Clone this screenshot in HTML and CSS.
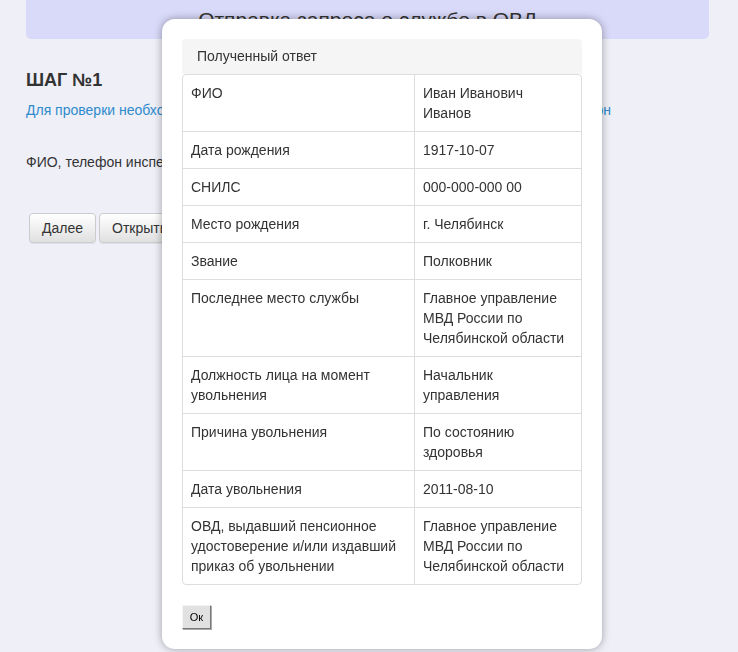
FILE: index.html
```html
<!DOCTYPE html>
<html lang="ru">
<head>
<meta charset="utf-8">
<link rel="stylesheet" href="styles.css">
</head>
<body>
<div class="page">
  <div class="topbar"><h1 class="title">Отправка запроса о службе в ОВД</h1></div>
  <h2 class="step">ШАГ №1</h2>
  <p class="hint">Для проверки необходимо заполнить поля ФИО инспектора и новый контактный телефон</p>
  <p class="field">ФИО, телефон инспектора</p>
  <div class="actions">
    <button class="btn">Далее</button>
    <button class="btn">Открыть запрос</button>
  </div>
</div>

<div class="modal">
  <div class="panel">
    <div class="panel-heading">Полученный ответ</div>
    <table class="data">
      <tr><td>ФИО</td><td>Иван Иванович Иванов</td></tr>
      <tr><td>Дата рождения</td><td>1917-10-07</td></tr>
      <tr><td>СНИЛС</td><td>000-000-000 00</td></tr>
      <tr><td>Место рождения</td><td>г. Челябинск</td></tr>
      <tr><td>Звание</td><td>Полковник</td></tr>
      <tr><td>Последнее место службы</td><td>Главное управление МВД России по Челябинской области</td></tr>
      <tr><td>Должность лица на момент увольнения</td><td>Начальник управления</td></tr>
      <tr><td>Причина увольнения</td><td>По состоянию здоровья</td></tr>
      <tr><td>Дата увольнения</td><td>2011-08-10</td></tr>
      <tr><td>ОВД, выдавший пенсионное удостоверение и/или издавший приказ об увольнении</td><td>Главное управление МВД России по Челябинской области</td></tr>
    </table>
  </div>
  <button class="ok">Ок</button>
</div>
</body>
</html>
```

FILE: styles.css
```css
html, body {
  margin: 0;
  padding: 0;
  height: 100%;
  overflow: hidden;
}
body {
  background: #efeff8;
  font-family: "Liberation Sans", Arial, sans-serif;
  font-size: 14px;
  line-height: 20px;
  color: #333;
}
.page {
  padding: 0 29px 0 26px;
}
.topbar {
  background: #d9d9f9;
  height: 39px;
  border-radius: 0 0 5px 5px;
  display: flex;
  justify-content: center;
}
.title {
  margin: 0;
  font-size: 21px;
  font-weight: normal;
  line-height: 24px;
  padding-top: 8px;
  color: #333;
  white-space: nowrap;
}
.step {
  margin: 30px 0 0;
  font-size: 18px;
  font-weight: bold;
  line-height: 22px;
}
.hint {
  margin: 9px 0 0;
  color: #2e8bcc;
  white-space: nowrap;
}
.field {
  margin: 32px 0 0;
  white-space: nowrap;
}
.actions {
  margin-top: 41px;
  padding-left: 3px;
  display: flex;
  gap: 3px;
}
.btn {
  font-family: "Liberation Sans", Arial, sans-serif;
  font-size: 14px;
  line-height: 20px;
  color: #333;
  height: 30px;
  padding: 4px 12px;
  border: 1px solid #ccc;
  border-radius: 4px;
  background: linear-gradient(#ffffff, #e0e0e0);
  box-shadow: inset 0 1px 0 rgba(255,255,255,.15), 0 1px 1px rgba(0,0,0,.075);
}
.modal {
  position: fixed;
  left: 162px;
  top: 19px;
  width: 400px;
  height: 590px;
  padding: 20px;
  background: #fff;
  border-radius: 13px;
  box-shadow: 0 0 8px rgba(0,0,0,.35);
}
.panel-heading {
  background: #f5f5f5;
  border-radius: 4px 4px 0 0;
  padding: 7px 15px 8px;
  line-height: 20px;
}
.data {
  width: 400px;
  border-collapse: separate;
  border-spacing: 0;
  border: 1px solid #ddd;
  border-radius: 4px;
  table-layout: fixed;
}
.data td {
  padding: 8px;
  vertical-align: top;
  border-top: 1px solid #ddd;
}
.data tr:first-child td {
  border-top: none;
}
.data td:first-child {
  width: 215px;
  border-right: 1px solid #ddd;
}
.ok {
  margin-top: 20px;
  font-family: "Liberation Sans", Arial, sans-serif;
  font-size: 11px;
  color: #000;
  width: 29px;
  height: 24px;
  padding: 0;
  background: #e1e1e1;
  border: 1px solid #f4f4f4;
  border-right-color: #777;
  border-bottom-color: #777;
  box-shadow: 1px 1px 0 #aaa;
}
```
